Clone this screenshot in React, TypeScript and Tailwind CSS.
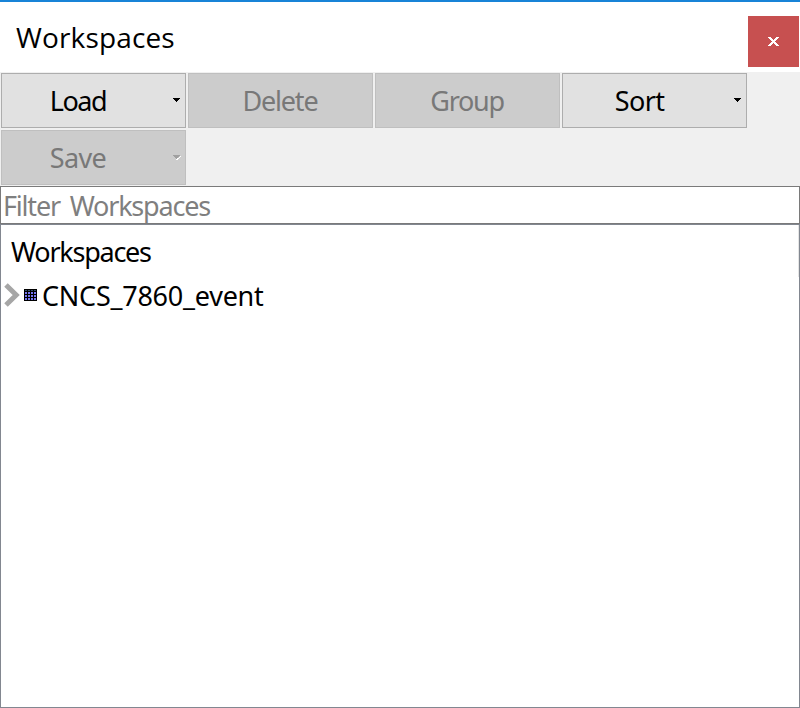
import React from "react";

type ToolButtonProps = {
  label: string;
  tracking: string;
  disabled?: boolean;
  menu?: boolean;
};

function MenuArrow({ disabled }: { disabled?: boolean }) {
  return (
    <svg width="8" height="5" viewBox="0 0 8 5" shapeRendering="crispEdges" className="block shrink-0">
      {disabled && <path d="M7 1h1v1h-1v1h-1v1h-1v1h-2v-1h1v-1h2v-1h1z" fill="#fff" />}
      <path d="M0 0h7v1h-1v1h-1v1h-1v1h-1v-1h-1v-1h-1v-1h-1z" fill={disabled ? "#a0a0a0" : "#000"} />
    </svg>
  );
}

function ToolButton({ label, tracking, disabled, menu }: ToolButtonProps) {
  const tone = disabled
    ? "border-[#bfbfbf] bg-[#cccccc] text-[#787878]"
    : "border-[#adadad] bg-[#e1e1e1] text-black";
  return (
    <button disabled={disabled} className={"flex h-[55px] w-[185px] items-center border " + tone}>
      <span className={"flex-1 text-center text-[27px] leading-[36px] whitespace-nowrap " + tracking}>{label}</span>
      {menu && (
        <span className="flex w-[29px] justify-end pr-[4px]">
          <MenuArrow disabled={disabled} />
        </span>
      )}
    </button>
  );
}

function CloseIcon() {
  return (
    <svg width="11" height="9" viewBox="0 0 11 9" shapeRendering="crispEdges">
      <path
        d="M0 0h3v1h1v1h1v1h1v-1h1v-1h1v-1h3v1h-1v1h-1v1h-1v1h-1v1h1v1h1v1h1v1h1v1h-3v-1h-1v-1h-1v-1h-1v1h-1v1h-1v1h-3v-1h1v-1h1v-1h1v-1h1v-1h-1v-1h-1v-1h-1v-1h-1z"
        fill="#fff"
      />
    </svg>
  );
}

function GridIcon() {
  return (
    <svg width="13" height="12" viewBox="0 0 13 12" shapeRendering="crispEdges" className="shrink-0">
      <rect width="13" height="12" fill="#000" />
      {[1, 4, 7, 10].map((x) =>
        [1, 3, 6, 9].map((y) => (
          <rect key={x + "-" + y} x={x} y={y} width="2" height={y === 1 ? 1 : 2} fill={y === 1 ? "#34506a" : "#7676f0"} />
        ))
      )}
    </svg>
  );
}

export default function App() {
  return (
    <div className="flex h-[708px] w-[800px] flex-col overflow-hidden border-t-2 border-[#1883d7] bg-white font-['Noto_Sans','Open_Sans',sans-serif] text-black">
      <header className="flex h-[70px] shrink-0 items-start justify-between pr-px">
        <h1 className="mt-[17px] ml-4 font-['Open_Sans','Noto_Sans',sans-serif] text-[28px] leading-[36px] tracking-[0.15px]">Workspaces</h1>
        <button className="mt-[14px] flex h-[51px] w-[51px] items-center justify-center bg-[#c75050]">
          <CloseIcon />
        </button>
      </header>
      <div className="flex h-[114px] shrink-0 flex-wrap content-start gap-[2px] bg-[#f0f0f0] pt-px pl-px">
        <ToolButton label="Load" tracking="tracking-[-1.4px] pr-[2px]" menu />
        <ToolButton label="Delete" tracking="tracking-[-1.2px] pr-px" disabled />
        <ToolButton label="Group" tracking="tracking-[-1.3px] pr-px" disabled />
        <ToolButton label="Sort" tracking="tracking-[-0.6px] pr-px" menu />
        <ToolButton label="Save" tracking="tracking-[-0.6px] pr-[2px]" disabled menu />
      </div>
      <div className="flex h-[38px] shrink-0 items-center border border-[#7a7a7a] bg-white pt-[2px] pl-[2px]">
        <span className="text-[27px] leading-[36px] tracking-[-1.2px] text-[#7f7f7f] [word-spacing:4px]">Filter Workspaces</span>
      </div>
      <main className="flex flex-1 flex-col border border-[#828790]">
        <div className="flex h-[52px] items-center border-r border-[#e5e5e5] pt-[2px] pl-[10px]">
          <span className="text-[27px] leading-[36px] tracking-[-1.25px]">Workspaces</span>
        </div>
        <div className="flex h-[36px] items-center pl-[3px]">
          <svg width="16" height="24" viewBox="0 0 16 24" className="shrink-0">
            <path d="M2 2L12.2 12L2 22" fill="none" stroke="#a6a6a6" strokeWidth="5" />
          </svg>
          <div className="ml-[4px] flex"><GridIcon /></div>
          <span className="ml-[5px] pt-[2px] text-[27px] leading-[36px] tracking-[-0.25px]">CNCS_7860_event</span>
        </div>
      </main>
    </div>
  );
}
